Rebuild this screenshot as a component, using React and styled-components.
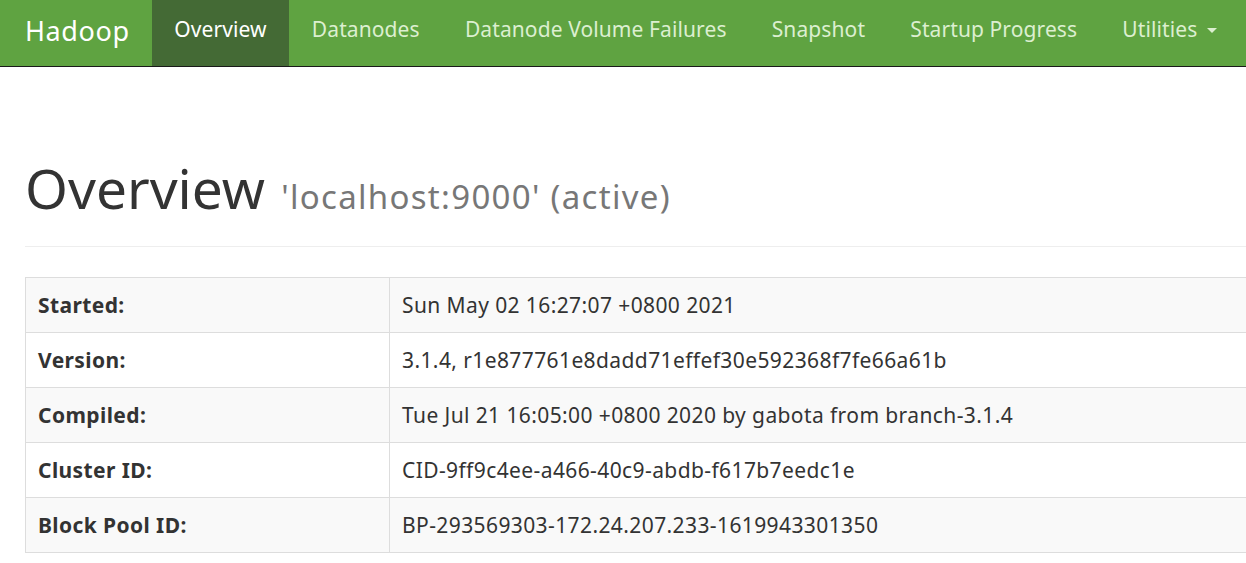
import React from 'react';
import styled, { createGlobalStyle } from 'styled-components';

const GlobalStyle = createGlobalStyle`
  html, body {
    margin: 0;
    padding: 0;
    background: #fff;
    overflow: hidden;
  }
  body {
    font-family: "Noto Sans", "Open Sans", "Liberation Sans", sans-serif;
    color: #333;
  }
`;

const navItems = [
  { label: 'Overview', active: true },
  { label: 'Datanodes' },
  { label: 'Datanode Volume Failures' },
  { label: 'Snapshot' },
  { label: 'Startup Progress' },
  { label: 'Utilities', dropdown: true },
];

const rows = [
  ['Started:', 'Sun May 02 16:27:07 +0800 2021'],
  ['Version:', '3.1.4, r1e877761e8dadd71effef30e592368f7fe66a61b'],
  ['Compiled:', 'Tue Jul 21 16:05:00 +0800 2020 by gabota from branch-3.1.4'],
  ['Cluster ID:', 'CID-9ff9c4ee-a466-40c9-abdb-f617b7eedc1e'],
  ['Block Pool ID:', 'BP-293569303-172.24.207.233-1619943301350'],
];

export default function App() {
  return (
    <>
      <GlobalStyle />
      <Navbar>
        <Brand>Hadoop</Brand>
        <NavList>
          {navItems.map(item => (
            <NavItem key={item.label} $active={item.active}>
              {item.label}
              {item.dropdown && <Caret />}
            </NavItem>
          ))}
        </NavList>
      </Navbar>

      <Container>
        <PageHeader>
          <Title>
            Overview <small>'localhost:9000' (active)</small>
          </Title>
        </PageHeader>

        <InfoTable>
          <tbody>
            {rows.map(([k, v]) => (
              <tr key={k}>
                <th>{k}</th>
                <td>{v}</td>
              </tr>
            ))}
          </tbody>
        </InfoTable>
      </Container>
    </>
  );
}

const Navbar = styled.nav`
  display: flex;
  align-items: stretch;
  height: 66px;
  background: #5fa341;
  border-bottom: 1px solid #1a1a1a;
  white-space: nowrap;
`;

const Brand = styled.div`
  display: flex;
  align-items: center;
  padding: 0 22px 6px 25px;
  font-size: 27px;
  letter-spacing: 0.6px;
  color: #fff;
`;

const NavList = styled.ul`
  display: flex;
  margin: 0;
  padding: 0;
  list-style: none;
`;

const NavItem = styled.li`
  display: flex;
  align-items: center;
  padding: 0 22.6px 8px;
  font-size: 21px;
  letter-spacing: 0.1px;
  color: ${p => (p.$active ? '#fff' : '#dcefd0')};
  background: ${p => (p.$active ? '#446a35' : 'transparent')};
`;

const Caret = styled.span`
  display: inline-block;
  margin-left: 10px;
  margin-top: 3px;
  border-top: 5px solid #dcefd0;
  border-left: 5px solid transparent;
  border-right: 5px solid transparent;
`;

const Container = styled.main`
  padding: 0 0 0 25px;
`;

const PageHeader = styled.div`
  margin-top: 91px;
  padding-bottom: 27px;
  border-bottom: 1px solid #eee;
  margin-bottom: 30px;
`;

const Title = styled.h1`
  margin: 0;
  font-size: 55px;
  font-weight: 400;
  line-height: 1.1;
  color: #333;

  small {
    font-size: 33px;
    letter-spacing: 1.3px;
    color: #777;
    margin-left: 2px;
  }
`;

const InfoTable = styled.table`
  width: calc(100% + 40px);
  border-collapse: collapse;
  border: 1px solid #ddd;
  font-size: 21px;
  letter-spacing: 0.4px;

  tr:nth-child(odd) {
    background: #f9f9f9;
  }

  th, td {
    height: 54px;
    padding: 0 12px;
    border: 1px solid #ddd;
    text-align: left;
    vertical-align: middle;
    color: #333;
  }

  th {
    width: 339px;
    font-weight: 700;
  }
`;
